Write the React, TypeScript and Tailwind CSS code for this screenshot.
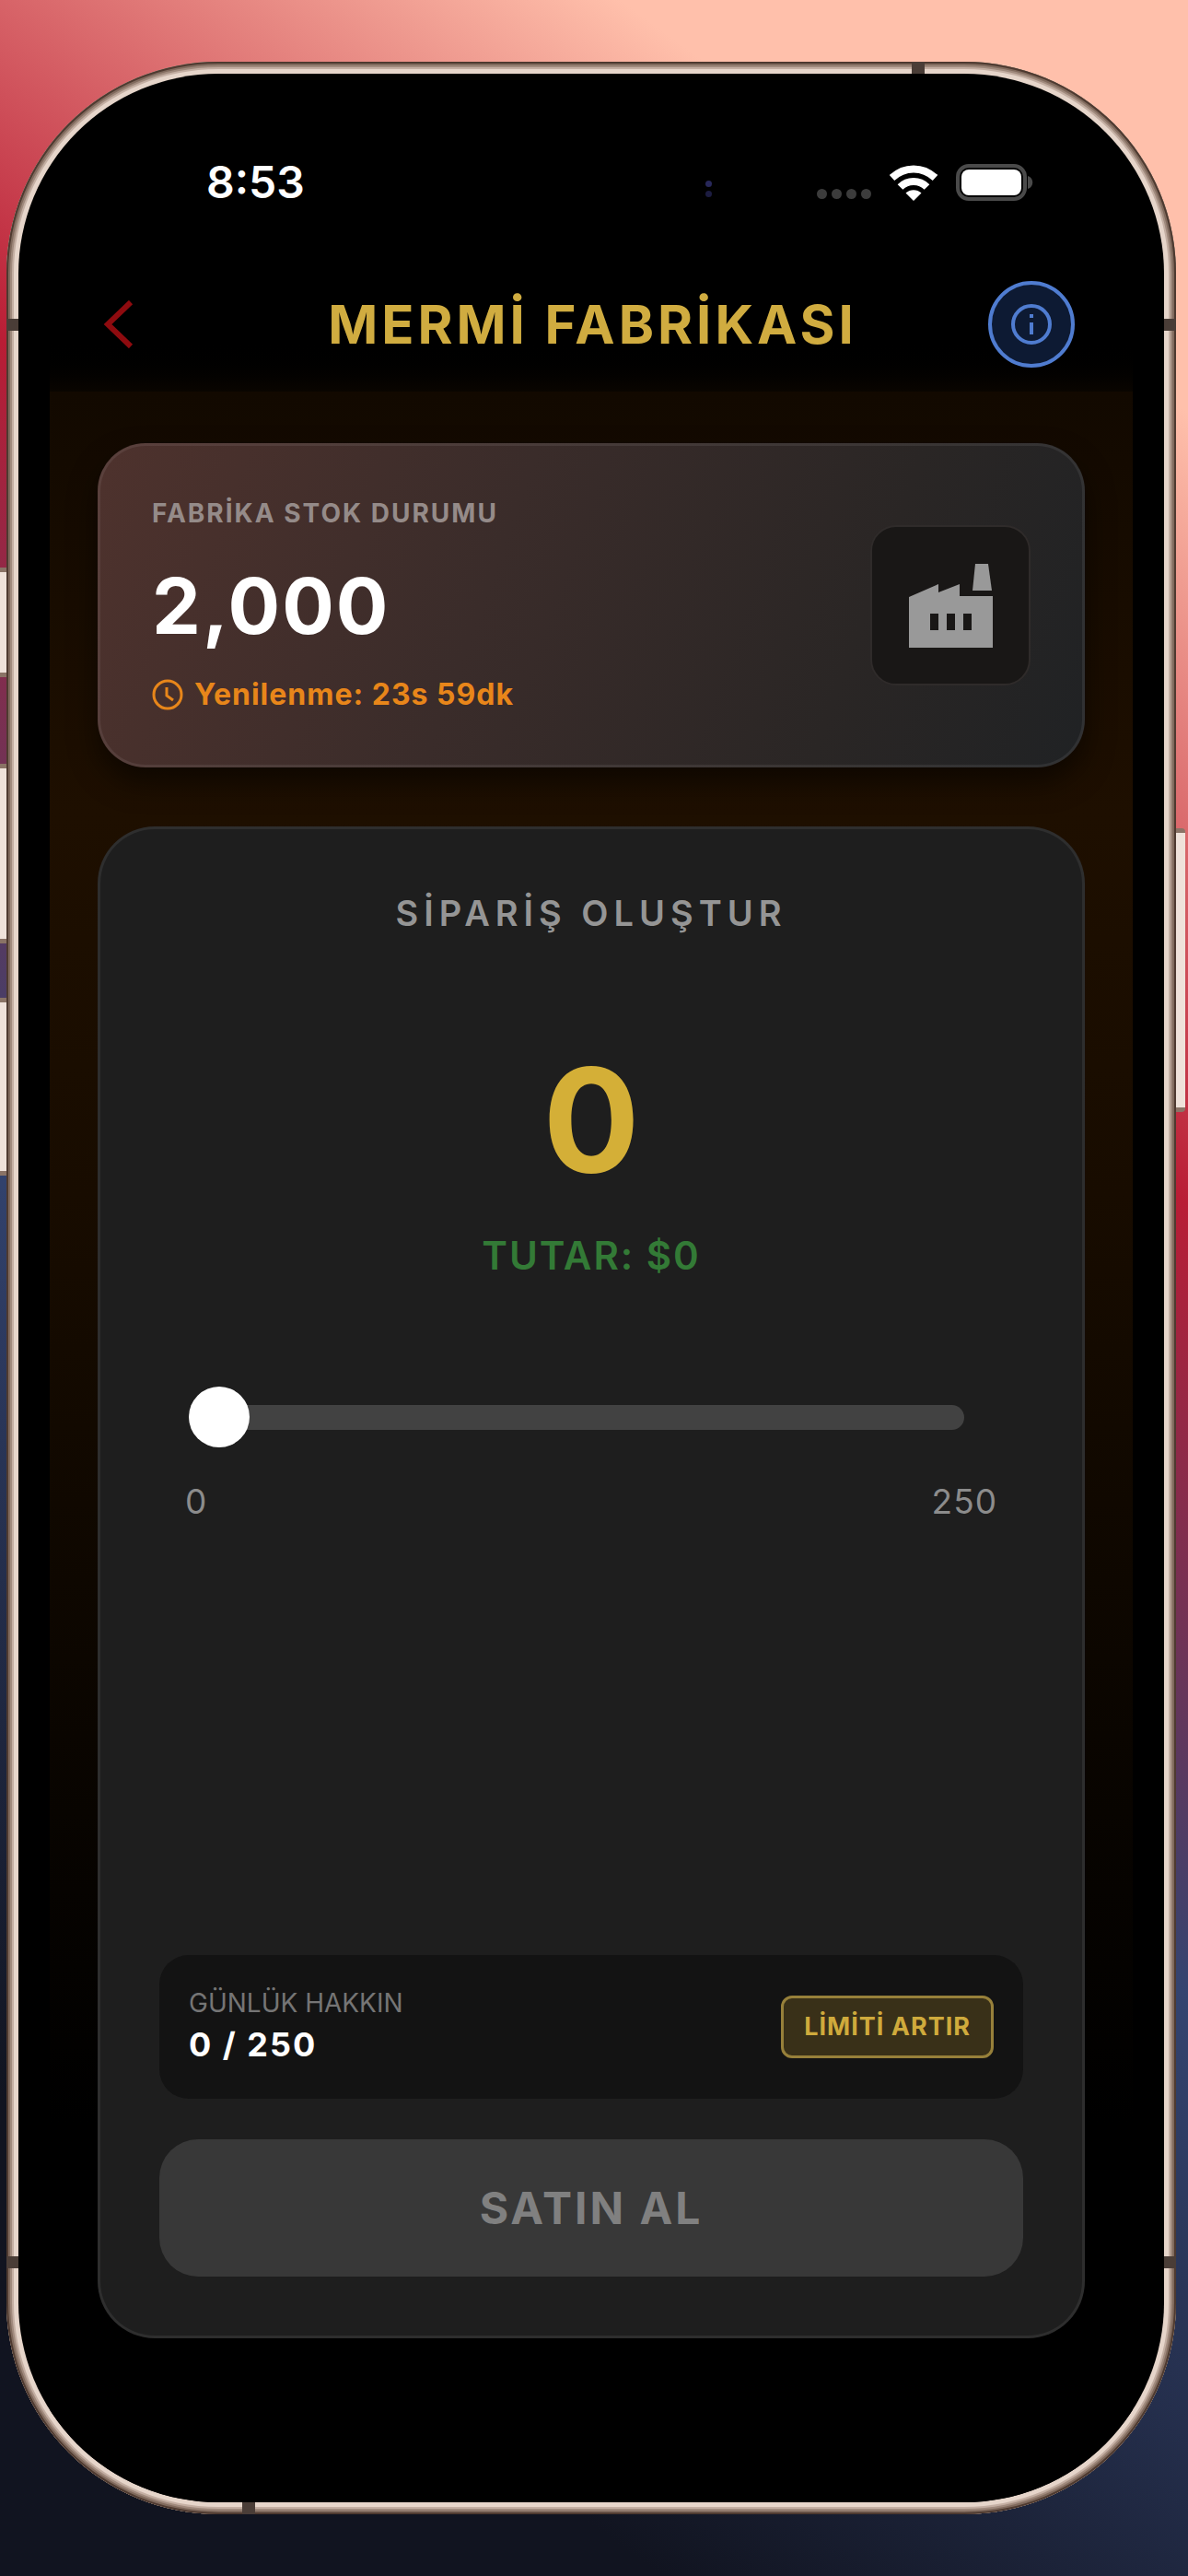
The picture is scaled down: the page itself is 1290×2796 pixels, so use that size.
import { useState } from 'react';

function WifiIcon() {
  return (
    <svg viewBox="0 0 52 39" className="h-[39px] w-[52px]" fill="none" stroke="white" strokeWidth="8">
      <path d="M2.5 14C16 1.200 36 1.200 49.5 14" />
      <path d="M11.5 24C19.5 16 32.5 16 40.5 24" />
      <path d="M26 39l-8.500-8.500c4.500-4.500 12.500-4.500 17 0z" fill="white" stroke="none" />
    </svg>
  );
}

function BatteryIcon() {
  return (
    <svg viewBox="0 0 84 40" className="h-10 w-[84px]">
      <rect x="2" y="2" width="73" height="36" rx="12" fill="none" stroke="#4a4a4a" strokeWidth="4" />
      <rect x="6" y="6" width="65" height="28" rx="8" fill="white" />
      <path d="M78 13c7 2 7 12 0 14z" fill="#4a4a4a" />
    </svg>
  );
}

function FactoryIcon() {
  return (
    <svg viewBox="0 0 91 91" className="h-[91px] w-[91px]" fill="#999999">
      <path
        fillRule="evenodd"
        d="M0 36L32 22v9l23-9v13h36v56H0zM23 54v18h9V54zM41 54v18h9V54zM59 54v18h9V54z"
      />
      <path d="M72 0h14l4 29H69z" />
    </svg>
  );
}

function StatusBar() {
  return (
    <div className="relative flex h-[148px] items-end justify-between pr-[108px] pl-[170px]">
      <span className="text-[48px] leading-[60px] font-semibold text-white">8:53</span>
      {/* camera glint */}
      <div className="absolute bottom-[14px] left-[712px] flex flex-col gap-[4px]">
        <i className="size-[7px] rounded-full bg-[#28285a]" />
        <i className="size-[7px] rounded-full bg-[#1c1c40]" />
      </div>
      <div className="flex h-[60px] items-center gap-[20px]">
        <div className="flex gap-[5px] pt-[24px]">
          <i className="size-[11px] rounded-full bg-[#3c3c3c]" />
          <i className="size-[11px] rounded-full bg-[#3c3c3c]" />
          <i className="size-[11px] rounded-full bg-[#3c3c3c]" />
          <i className="size-[11px] rounded-full bg-[#3c3c3c]" />
        </div>
        <WifiIcon />
        <BatteryIcon />
      </div>
    </div>
  );
}

function Header() {
  return (
    <header className="flex h-[197px] items-center justify-between bg-linear-to-b from-black from-70% to-[#0a0500] pt-[50px] pr-[63px] pl-[54px]">
      <button aria-label="Geri" className="flex h-[94px] w-[106px] items-center">
        <svg viewBox="0 0 34 52" className="h-[52px] w-[42px]" fill="none" stroke="#8e0b0f" strokeWidth="6">
          <path d="M30 2L5 26l25 24" />
        </svg>
      </button>
      <h1 className="text-[58px] leading-[70px] font-bold tracking-[4px] text-[#d0ac40]">MERMİ FABRİKASI</h1>
      <button
        aria-label="Bilgi"
        className="flex size-[94px] items-center justify-center rounded-full border-4 border-[#4f7cd0] bg-[#0d1a33]"
      >
        <svg viewBox="0 0 44 44" className="size-[44px]" fill="none" stroke="#4f7cd0" strokeWidth="4">
          <circle cx="22" cy="22" r="20" />
          <path d="M22 20v13M22 11v4" />
        </svg>
      </button>
    </header>
  );
}

function StockCard() {
  return (
    <section className="flex h-[352px] items-center justify-between rounded-[52px] border-[3px] border-white/7 bg-linear-[110deg,#4e322d,#3a2c2a_40%,#2a2625_75%,#202224] bg-origin-border px-[56px] shadow-[0_16px_30px_rgba(0,0,0,0.5)]">
      <div className="flex flex-col">
        <h2 className="text-[28px] leading-[34px] font-bold tracking-[2px] text-[#958b89]">FABRİKA STOK DURUMU</h2>
        <p className="mt-[32px] text-[84px] leading-[104px] font-bold tracking-[2px] text-white">2,000</p>
        <p className="mt-[24px] flex items-center gap-[12px] text-[32px] leading-[40px] font-bold tracking-[1px] text-[#e8861a]">
          <svg viewBox="0 0 34 34" className="size-[34px]" fill="none" stroke="currentColor" strokeWidth="3">
            <circle cx="17" cy="17" r="15" />
            <path d="M16 9v9l7 5" />
          </svg>
          Yenilenme: 23s 59dk
        </p>
      </div>
      <div className="flex size-[174px] items-center justify-center rounded-[28px] border-2 border-[#2f2b2a] bg-[#191716]">
        <FactoryIcon />
      </div>
    </section>
  );
}

function OrderCard() {
  const [amount, setAmount] = useState(0);
  const limit = 250;

  return (
    <section className="flex grow flex-col rounded-[62px] border-[3px] border-white/7 bg-[#1e1e1e] px-[64px] pt-[68px] pb-[64px]">
      <h2 className="text-center text-[38px] leading-[46px] font-semibold tracking-[6px] text-[#959595]">SİPARİŞ OLUŞTUR</h2>
      <output htmlFor="amount" className="mt-[104px] text-center text-[156px] leading-[196px] font-bold text-[#d4af37]">
        {amount}
      </output>
      <p className="mt-[24px] text-center text-[42px] leading-[50px] font-semibold tracking-[2px] text-[#337a36]">
        TUTAR: ${amount}
      </p>
      <input
        id="amount"
        type="range"
        aria-label="Sipariş miktarı"
        min={0}
        max={limit}
        value={amount}
        onChange={(e) => setAmount(Number(e.target.value))}
        className="mt-[117px] mr-[64px] ml-[32px] h-[66px] appearance-none bg-transparent [&::-webkit-slider-runnable-track]:h-[27px] [&::-webkit-slider-runnable-track]:rounded-full [&::-webkit-slider-runnable-track]:bg-[#424242] [&::-webkit-slider-thumb]:-mt-[20px] [&::-webkit-slider-thumb]:size-[66px] [&::-webkit-slider-thumb]:appearance-none [&::-webkit-slider-thumb]:rounded-full [&::-webkit-slider-thumb]:bg-white"
      />
      <div className="mt-[36px] flex justify-between px-[28px] text-[37px] leading-[46px] tracking-[1px] text-[#8c8c8c]">
        <span>0</span>
        <span>{limit}</span>
      </div>

      <div className="mt-auto flex h-[156px] items-center justify-between rounded-[32px] bg-[#131313] px-[32px]">
        <div className="pt-[2px]">
          <h3 className="text-[28px] leading-[34px] text-[#757575]">GÜNLÜK HAKKIN</h3>
          <p className="mt-[2px] text-[36px] leading-[52px] font-bold tracking-[2px] text-white">
            {amount} / {limit}
          </p>
        </div>
        <button className="h-[68px] rounded-[12px] border-[3px] border-[#97803a] bg-[#393018] px-[22px] text-[27px] font-bold tracking-[1px] text-[#cfaa3c]">
          LİMİTİ ARTIR
        </button>
      </div>
      <button className="mt-[44px] h-[149px] rounded-[42px] bg-[#383838] text-[48px] font-bold tracking-[3px] text-[#808080]">
        SATIN AL
      </button>
    </section>
  );
}

// Side keys and antenna bands of the phone body
function Hardware() {
  const key = 'absolute border-y-[5px] border-[#8a7366] bg-[#efe2da]';
  const band = 'absolute bg-[#4a3d37]';

  return (
    <div aria-hidden="true">
      <div className={`${key} top-[549px] -left-[7px] h-[119px] w-[7px]`} />
      <div className={`${key} top-[762px] -left-[7px] h-[195px] w-[7px]`} />
      <div className={`${key} top-[1016px] -left-[7px] h-[193px] w-[7px]`} />
      <div className={`${key} top-[832px] -right-[10px] h-[308px] w-[10px] rounded-r-[4px]`} />
      <div className={`${band} top-0 right-[273px] h-[13px] w-[14px]`} />
      <div className={`${band} top-[279px] left-0 h-[13px] w-[13px]`} />
      <div className={`${band} top-[279px] right-0 h-[13px] w-[13px]`} />
      <div className={`${band} bottom-[267px] left-0 h-[13px] w-[13px]`} />
      <div className={`${band} right-0 bottom-[267px] h-[13px] w-[13px]`} />
      <div className={`${band} bottom-0 left-[256px] h-[13px] w-[14px]`} />
    </div>
  );
}

export default function App() {
  return (
    <div
      lang="tr"
      className="flex min-h-screen overflow-hidden bg-linear-[216deg,#ffc0ab_12%,#b91d35_35%,#344470_58%,#111420_86%] py-[67px] pr-[13px] pl-[7px] font-[Inter,sans-serif]"
    >
      <div className="relative flex grow rounded-[230px] bg-[#e6d5ca] p-[13px] shadow-[inset_0_0_0_2px_#4e3a30,inset_0_0_0_4px_#806a5d,inset_0_0_0_6px_#a08a7d,inset_0_0_0_8px_#c4afa3]">
        <Hardware />
        <main className="flex grow flex-col overflow-hidden rounded-[217px] bg-black px-[34px]">
          <StatusBar />
          <Header />
          <div className="flex grow flex-col gap-[64px] bg-linear-[180deg,#120900,#1e0f00_20%,#180c00_38%,#000_82%] px-[52px] pt-[56px] pb-[178px]">
            <StockCard />
            <OrderCard />
          </div>
        </main>
      </div>
    </div>
  );
}
